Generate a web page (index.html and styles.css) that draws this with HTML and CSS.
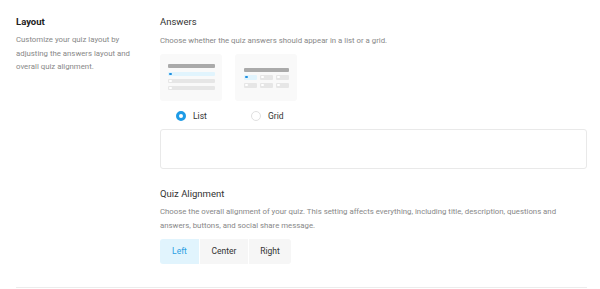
FILE: index.html
```html
<!DOCTYPE html>
<html>
<head>
<meta charset="utf-8">
<link rel="stylesheet" href="styles.css">
</head>
<body>
<div class="section">
  <div class="side">
    <div class="side-title">Layout</div>
    <p class="side-desc">Customize your quiz layout by adjusting the answers layout and overall quiz alignment.</p>
  </div>
  <div class="main">
    <div class="title">Answers</div>
    <p class="desc">Choose whether the quiz answers should appear in a list or a grid.</p>
    <div class="options">
      <div class="option">
        <div class="thumb thumb-list">
          <div class="bar"></div>
          <div class="row active"><span class="dot"></span></div>
          <div class="row"><span class="dot"></span></div>
          <div class="row"><span class="dot"></span></div>
        </div>
        <label class="radio"><span class="circle checked"></span><span>List</span></label>
      </div>
      <div class="option">
        <div class="thumb thumb-grid">
          <div class="bar"></div>
          <div class="cells">
            <div class="cell active"><span class="dot"></span></div>
            <div class="cell"><span class="dot"></span></div>
            <div class="cell"><span class="dot"></span></div>
            <div class="cell"><span class="dot"></span></div>
            <div class="cell"><span class="dot"></span></div>
            <div class="cell"><span class="dot"></span></div>
          </div>
        </div>
        <label class="radio"><span class="circle"></span><span>Grid</span></label>
      </div>
    </div>
    <div class="box"></div>
    <div class="title title2">Quiz Alignment</div>
    <p class="desc desc2">Choose the overall alignment of your quiz. This setting affects everything, including title, description, questions and answers, buttons, and social share message.</p>
    <div class="seg">
      <div class="seg-btn on">Left</div>
      <div class="seg-btn">Center</div>
      <div class="seg-btn">Right</div>
    </div>
  </div>
</div>
<div class="rule"></div>
</body>
</html>
```
FILE: styles.css
```css
html, body { margin: 0; padding: 0; background: #fff; }
body { font-family: Roboto, "Liberation Sans", sans-serif; width: 600px; height: 289px; overflow: hidden; }
.section { display: flex; padding: 14px 13px 0 16px; height: 273px; box-sizing: border-box; }
.side { width: 144px; flex: none; padding-top: 1px; }
.side-title { font-size: 9.5px; font-weight: 700; color: #222; line-height: 13px; }
.side-desc { margin: 5px 0 0; font-size: 7.8px; line-height: 13.5px; color: #888; padding-right: 8px; }
.main { flex: 1; padding-top: 1px; }
.title { font-size: 9.5px; color: #333; line-height: 14px; }
.desc { margin: 5px 0 0; font-size: 7.8px; line-height: 13.5px; color: #888; }
.desc2 { margin-top: 4px; line-height: 14px; }
.options { display: flex; gap: 13px; margin-top: 6px; }
.option { display: flex; flex-direction: column; align-items: flex-start; width: 62px; }
.thumb { width: 62px; height: 47px; background: #f9f9f9; border-radius: 3px; box-sizing: border-box; }
.thumb-list { padding: 10px 7px 0 8px; }
.thumb-list .bar { height: 4px; background: #aaa; border-radius: 1px; margin-bottom: 4px; }
.thumb-list .row { height: 4.5px; background: #e6e6e6; border-radius: 1px; margin-bottom: 2.5px; display: flex; align-items: center; padding-left: 1px; }
.row.active, .cell.active { background: #e1f4fd; }
.dot { width: 2.5px; height: 2.5px; border-radius: 50%; background: #fff; display: block; }
.active .dot { background: #1d8fe1; }
.thumb-grid { padding: 14px 8px 0 9px; }
.thumb-grid .bar { height: 4px; background: #aaa; border-radius: 1px; margin-bottom: 3px; }
.cells { display: grid; grid-template-columns: repeat(3, 1fr); gap: 3px 3px; }
.cell { height: 5px; background: #e6e6e6; border-radius: 1px; display: flex; align-items: center; padding-left: 1px; }
.radio { display: flex; align-items: center; gap: 7px; margin-top: 10px; font-size: 8.5px; color: #333; padding-left: 16px; }
.circle { width: 10px; height: 10px; border-radius: 50%; border: 1px solid #e0e0e0; box-sizing: border-box; background: #fff; flex: none; }
.circle.checked { border: 3px solid #1e9be6; background: #fff; }
.box { margin-top: 8px; height: 40px; border: 1px solid #e9e9e9; border-radius: 3px; box-sizing: border-box; }
.title2 { margin-top: 18px; }
.seg { display: flex; gap: 1px; margin-top: 6px; }
.seg-btn { height: 25px; line-height: 25px; font-size: 8.5px; color: #333; background: #f6f6f6; text-align: center; }
.seg-btn:nth-child(1) { width: 39px; border-radius: 3px 0 0 3px; }
.seg-btn:nth-child(2) { width: 48px; }
.seg-btn:nth-child(3) { width: 42px; border-radius: 0 3px 3px 0; }
.seg-btn.on { background: #e1f4fd; color: #2a9fe3; }
.rule { margin: 14px 13px 0 16px; height: 1px; background: #ececec; }
```
